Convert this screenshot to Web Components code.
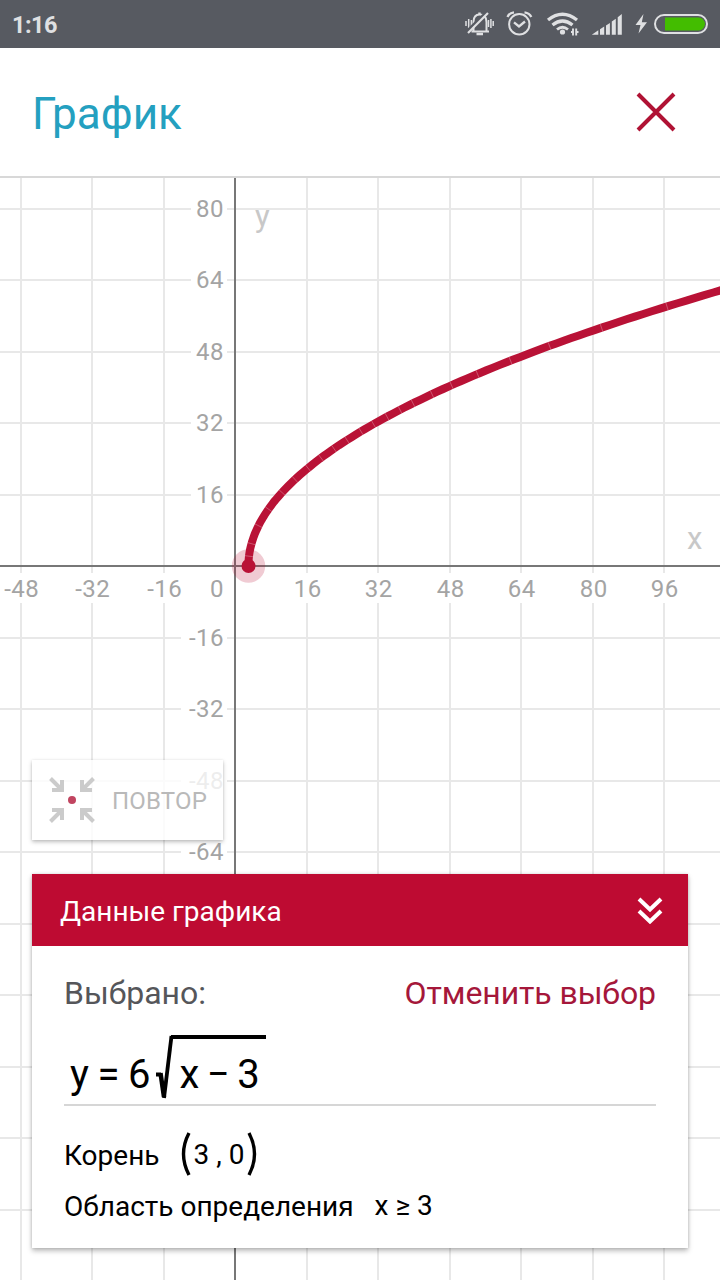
<!DOCTYPE html>
<html lang="ru">
<head>
<meta charset="utf-8">
<title>График</title>
<style>
    body {
        margin: 0;
        width: 720px;
        height: 1280px;
        overflow: hidden;
        background: #fff;
        font-family: Roboto, "Noto Sans", sans-serif;
    }
</style>
</head>
<body>
<graph-screen>
    <status-bar slot="status" time="1:16"></status-bar>
    <page-header slot="header">График</page-header>
    <graph-plot slot="plot"></graph-plot>
    <repeat-button slot="overlay">ПОВТОР</repeat-button>
    <data-panel slot="overlay" panel-title="Данные графика">
        <selected-row label="Выбрано:" action="Отменить выбор"></selected-row>
        <math-formula></math-formula>
        <data-row label="Корень"><math-point x="3" y="0"></math-point></data-row>
        <data-row label="Область определения"><math-relation left="x" sign="≥" right="3"></math-relation></data-row>
    </data-panel>
</graph-screen>

<script>
class GraphScreen extends HTMLElement {
    constructor() {
        super()
        this.attachShadow({ mode: 'open' })
        this.shadowRoot.innerHTML = `
        <style>
        :host{
            display: flex;
            flex-direction: column;
            width: 720px;
            height: 1280px;
        }
        .stage{
            flex: 1;
            display: grid;
            min-height: 0;
        }
        .plot, .overlay{
            grid-area: 1 / 1;
            min-height: 0;
        }
        .overlay{
            display: flex;
            flex-direction: column;
            justify-content: flex-end;
            align-items: flex-start;
            gap: 34px;
            padding: 0 32px 32px;
        }
        </style>
        <slot name="status"></slot>
        <slot name="header"></slot>
        <div class="stage">
            <div class="plot"><slot name="plot"></slot></div>
            <div class="overlay"><slot name="overlay"></slot></div>
        </div>
        `
    }
}
customElements.define("graph-screen", GraphScreen)

class StatusBar extends HTMLElement {
    constructor() {
        super()
        this.attachShadow({ mode: 'open' })
        this.shadowRoot.innerHTML = `
        <style>
        :host{
            display: flex;
            justify-content: space-between;
            align-items: center;
            box-sizing: border-box;
            height: 48px;
            padding-left: 12px;
            background: #575a61;
            color: #dfe0e2;
        }
        span{
            font-size: 23.5px;
            font-weight: 700;
            line-height: 28px;
            letter-spacing: -.5px;
            padding-top: 2px;
        }
        svg{ display: block; }
        </style>
        <span></span>
        <svg width="260" height="48" viewBox="460 0 260 48" fill="none" stroke="#dfe0e2" stroke-width="2">
            <!-- muted bell -->
            <path d="M471.500 31.500H489M473.500 31V22Q473.500 14.500 479.500 14.500Q486.500 14.500 486.500 22V31.500"/>
            <path d="M479.500 12.500V14.500M476.500 34H483" stroke-width="2.4"/>
            <path d="M466 21V26M468.700 19V28M471.400 20V27M488.500 20V27M490.900 19V28M493.200 21V26" stroke-width="1.5"/>
            <path d="M466.500 31.500L487 11.500" stroke="#575a61" stroke-width="2.500"/>
            <path d="M468 33L488 13" stroke-width="2.200"/>
            <!-- alarm -->
            <circle cx="519.300" cy="24.300" r="10.200"/>
            <path d="M514 22.300L519 26.500L525 21.500" stroke-width="2.300"/>
            <path d="M507.500 17Q509 13 514 12.300M524.500 12.300Q529.500 13 531.300 17" stroke-width="2.300"/>
            <!-- wifi -->
            <path d="M548 20Q562.500 8.500 577 20" stroke-width="3.300"/>
            <path d="M552.500 25Q562.500 17 572.500 25" stroke-width="3.300"/>
            <path d="M557 29.500Q562.500 25 568 29.500" stroke-width="2.800"/>
            <circle cx="562.500" cy="32" r="2.600" fill="#dfe0e2" stroke="none"/>
            <path d="M573 28.500V35.500M576.200 28.500V35.500M571 32H573M576 32H578.500" stroke-width="1.900"/>
            <!-- signal -->
            <path d="M591.800 34.700L598.300 30.300V34.700ZM600 29.300L604.200 26.600V34.700H600ZM606 25.400L609.900 22.900V34.700H606ZM611.800 21.500L615.800 18.800V34.700H611.800ZM617.700 17.300L621.800 14V34.700H617.700Z" fill="#dfe0e2" stroke="none"/>
            <!-- charge -->
            <path d="M643.500 14L635.500 25H640.500L638.500 33.500L647 22.300H641.800Z" fill="#dfe0e2" stroke="none"/>
            <rect x="655" y="15" width="52" height="18" rx="9"/>
            <path d="M665 17.500H698.500A6.500 6.500 0 0 1 698.500 30.500H665Z" fill="#43bd00" stroke="none"/>
        </svg>
        `
    }
    connectedCallback() {
        this.shadowRoot.querySelector('span').textContent = this.getAttribute('time')
    }
}
customElements.define("status-bar", StatusBar)

class PageHeader extends HTMLElement {
    constructor() {
        super()
        this.attachShadow({ mode: 'open' })
        this.shadowRoot.innerHTML = `
        <style>
        :host{
            display: flex;
            justify-content: space-between;
            align-items: center;
            box-sizing: border-box;
            height: 130px;
            padding: 0 44px 0 32px;
            border-bottom: 2px solid #d8d8d8;
            background: #fff;
            color: #24a0c0;
        }
        h1{
            margin: 0;
            font-size: 44px;
            font-weight: 400;
            line-height: 52px;
            padding-top: 3px;
        }
        svg{ display: block; }
        </style>
        <h1><slot></slot></h1>
        <svg width="40" height="40" fill="none" stroke="#b01234" stroke-width="4">
            <path d="M2 2L38 38M38 2L2 38"/>
        </svg>
        `
    }
}
customElements.define("page-header", PageHeader)

class GraphPlot extends HTMLElement {
    constructor() {
        super()
        this.originX = 235;
        this.originY = 566;
        this.step = 71.5;
        this.unit = this.step / 16;
        this.joints = [249, 251.5, 258.5, 268.5, 282, 295, 308, 321, 334, 347, 361, 373.5, 387, 400, 413, 432, 451.5, 477.5, 510.5, 549.5, 601.5, 667];
        this.attachShadow({ mode: 'open' })
        this.shadowRoot.innerHTML = `
        <style>
        :host{ display: block; }
        svg{ display: block; }
        .grid{ stroke: #e8e8e8; stroke-width: 2; }
        .gap{ fill: #fff; }
        .axis{ stroke: #777; stroke-width: 2; }
        .curve{ stroke: #b91236; stroke-width: 8; fill: none; }
        .joint{ stroke: #fff; stroke-opacity: .35; stroke-width: .8; }
        .num{ font-size: 24px; fill: #a4a4a4; letter-spacing: .5px; }
        .name{ font-size: 31px; fill: #c8c8c8; }
        </style>
        <svg width="720" height="1102" viewBox="0 178 720 1102">
            ${this._grid()}
            <path class="axis" d="M${this.originX} 178V1280M0 ${this.originY}H720"/>
            <text class="name" x="255" y="227">y</text>
            <text class="name" x="687" y="548.500">x</text>
            <circle cx="248.500" cy="566" r="16.700" fill="#b91236" fill-opacity=".22"/>
            <path class="curve" d="${this._curve()}"/>
            <path class="joint" d="${this._joints()}"/>
            <circle cx="248.500" cy="566" r="7" fill="#b91236"/>
        </svg>
        `
    }

    _grid() {
        let lines = '', labels = '';
        for (let i = -3; i <= 6; i++) {
            const x = Math.round(this.originX + i * this.step);
            if (i == 0) continue;
            lines += `<path class="grid" d="M${x} 178V1280"/><rect class="gap" x="${x - 8}" y="573" width="16" height="30"/>`
            labels += `<text class="num" x="${x + 0.8}" y="597" text-anchor="middle">${i * 16}</text>`
        }
        for (let i = 5; i >= -9; i--) {
            const y = Math.round(this.originY - i * this.step);
            if (i == 0) continue;
            const left = i > 0 ? 191 : 181;
            lines += `<path class="grid" d="M0 ${y}H${left}M227 ${y}H720"/>`
            // the lower ones are covered by the data panel
            if (i >= -4) labels += `<text class="num" x="224" y="${y + 8}" text-anchor="end">${i * 16}</text>`
        }
        labels += `<text class="num" x="224" y="597" text-anchor="end">0</text>`
        return lines + labels
    }

    // y = 6 * sqrt(x - 3)
    _curve() {
        let d = '';
        for (let t = 0; t <= 10.6; t += 0.1) {
            const x = this.originX + (3 + t * t) * this.unit;
            const y = this.originY - 6 * t * this.unit;
            d += `${d ? 'L' : 'M'}${x.toFixed(1)} ${y.toFixed(1)}`
        }
        return d
    }

    _joints() {
        return this.joints.map(px => {
            const t = Math.sqrt((px - this.originX) / this.unit - 3);
            const y = this.originY - 6 * t * this.unit;
            // the tangent is (2t, -6), so the normal is (6, 2t)
            const len = Math.hypot(6, 2 * t);
            const nx = 6 / len * 4, ny = 2 * t / len * 4;
            return `M${(px - nx).toFixed(1)} ${(y - ny).toFixed(1)}L${(px + nx).toFixed(1)} ${(y + ny).toFixed(1)}`
        }).join('')
    }
}
customElements.define("graph-plot", GraphPlot)

class RepeatButton extends HTMLElement {
    constructor() {
        super()
        this.attachShadow({ mode: 'open' })
        this.shadowRoot.innerHTML = `
        <style>
        :host{
            display: flex;
            align-items: center;
            box-sizing: border-box;
            width: 191px;
            height: 80px;
            padding: 0 0 0 16px;
            gap: 16px;
            background: rgba(255,255,255,.8);
            box-shadow: 0 2px 4px rgba(0,0,0,.25), 0 0 2px rgba(0,0,0,.08);
            color: #b9b9b9;
            font-size: 24px;
            line-height: 30px;
            letter-spacing: .2px;
        }
        svg{ display: block; flex: none; }
        span{ padding-top: 2px; }
        </style>
        <svg width="48" height="48" viewBox="0 0 48 48" fill="none" stroke="#cbcbcb" stroke-width="4">
            <path d="M2.500 2.500L14 14M4 14H16M14 16V4"/>
            <path d="M45.500 2.500L34 14M44 14H32M34 16V4"/>
            <path d="M2.500 45.500L14 34M4 34H16M14 32V44"/>
            <path d="M45.500 45.500L34 34M44 34H32M34 32V44"/>
            <circle cx="24" cy="24" r="4" fill="#c14560" stroke="none"/>
        </svg>
        <span><slot></slot></span>
        `
    }
}
customElements.define("repeat-button", RepeatButton)

class DataPanel extends HTMLElement {
    constructor() {
        super()
        this.attachShadow({ mode: 'open' })
        this.shadowRoot.innerHTML = `
        <style>
        :host{
            display: block;
            width: 656px;
            height: 374px;
            background: #fff;
            box-shadow: 0 3px 5px rgba(0,0,0,.26), 0 0 3px rgba(0,0,0,.15);
        }
        header{
            display: flex;
            justify-content: space-between;
            align-items: center;
            box-sizing: border-box;
            height: 72px;
            padding: 0 24px 0 28px;
            background: #be0b32;
            color: #fff;
            font-size: 28px;
            line-height: 34px;
        }
        span{ padding-top: 4px; }
        .body{ padding: 0 32px; }
        </style>
        <header>
            <span></span>
            <svg width="28" height="28" fill="none" stroke="#fff" stroke-width="4">
                <path d="M3 3L14 13.500L25 3M3 15L14 25.500L25 15"/>
            </svg>
        </header>
        <div class="body"><slot></slot></div>
        `
    }
    connectedCallback() {
        this.shadowRoot.querySelector('span').textContent = this.getAttribute('panel-title')
    }
}
customElements.define("data-panel", DataPanel)

class SelectedRow extends HTMLElement {
    constructor() {
        super()
        this.attachShadow({ mode: 'open' })
        this.shadowRoot.innerHTML = `
        <style>
        :host{
            display: flex;
            justify-content: space-between;
            padding-top: 28px;
            font-size: 32px;
            line-height: 38px;
        }
        .label{ color: #55565a; }
        .action{ color: #a5173a; letter-spacing: -.1px; }
        </style>
        <span class="label"></span>
        <span class="action"></span>
        `
    }
    connectedCallback() {
        this.shadowRoot.querySelector('.label').textContent = this.getAttribute('label')
        this.shadowRoot.querySelector('.action').textContent = this.getAttribute('action')
    }
}
customElements.define("selected-row", SelectedRow)

class MathFormula extends HTMLElement {
    constructor() {
        super()
        this.attachShadow({ mode: 'open' })
        this.shadowRoot.innerHTML = `
        <style>
        :host{
            display: flex;
            box-sizing: border-box;
            height: 94px;
            padding: 23px 0 0 6px;
            border-bottom: 2px solid #d6d6d6;
            color: #000;
            font-size: 40px;
            line-height: 47px;
        }
        .left{ padding-top: 16px; white-space: pre; word-spacing: -1.3px; }
        svg{ display: block; flex: none; margin-left: 5px; }
        .under{
            height: 47px;
            margin-left: -3px;
            padding: 12px 6px 0 9px;
            border-top: 4px solid #000;
            white-space: pre;
            word-spacing: -2.5px;
        }
        </style>
        <span class="left">y = 6</span>
        <svg width="18" height="64" fill="none" stroke="#000">
            <path d="M0 39.500H5" stroke-width="4"/>
            <path d="M4.500 38L8 62" stroke-width="4.500"/>
            <path d="M8 63L15.500 1" stroke-width="3.800"/>
        </svg>
        <span class="under">x − 3</span>
        `
    }
}
customElements.define("math-formula", MathFormula)

class DataRow extends HTMLElement {
    constructor() {
        super()
        this.attachShadow({ mode: 'open' })
        this.shadowRoot.innerHTML = `
        <style>
        :host{
            display: flex;
            align-items: center;
            gap: 21px;
            height: 51px;
            color: #000;
            font-size: 28px;
            line-height: 34px;
        }
        :host(:first-of-type){ padding-top: 24px; }
        </style>
        <span></span>
        <slot></slot>
        `
    }
    connectedCallback() {
        this.shadowRoot.querySelector('span').textContent = this.getAttribute('label')
    }
}
customElements.define("data-row", DataRow)

class MathPoint extends HTMLElement {
    constructor() {
        super()
        this.attachShadow({ mode: 'open' })
        this.shadowRoot.innerHTML = `
        <style>
        :host{ display: flex; align-items: center; gap: 3px; }
        svg{ display: block; margin-bottom: 3px; }
        span{ white-space: pre; padding-bottom: 2px; }
        </style>
        <svg width="10" height="44" fill="none" stroke="#000" stroke-width="3.400"><path d="M8 1Q-3 22 8 43"/></svg>
        <span></span>
        <svg width="10" height="44" fill="none" stroke="#000" stroke-width="3.400"><path d="M2 1Q13 22 2 43"/></svg>
        `
    }
    connectedCallback() {
        this.shadowRoot.querySelector('span').textContent = this.getAttribute('x') + ' , ' + this.getAttribute('y')
    }
}
customElements.define("math-point", MathPoint)

class MathRelation extends HTMLElement {
    constructor() {
        super()
        this.attachShadow({ mode: 'open' })
        this.shadowRoot.innerHTML = `
        <style>
        :host{ display: block; padding-bottom: 2px; }
        </style>
        <span></span>
        `
    }
    connectedCallback() {
        this.shadowRoot.querySelector('span').textContent =
            ['left', 'sign', 'right'].map(name => this.getAttribute(name)).join(' ')
    }
}
customElements.define("math-relation", MathRelation)
</script>
</body>
</html>
